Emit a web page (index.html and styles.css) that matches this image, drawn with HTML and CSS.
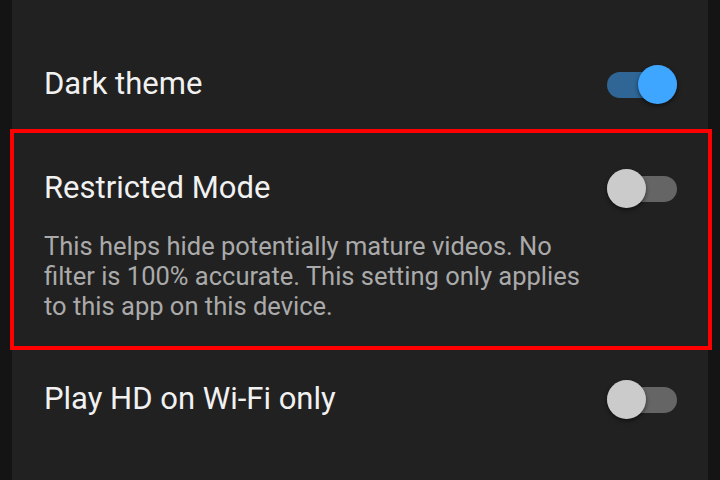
FILE: index.html
```html
<!DOCTYPE html>
<html lang="en">
<head>
<meta charset="utf-8">
<title>Settings</title>
<link rel="stylesheet" href="styles.css">
</head>
<body>
<main class="screen">
  <div class="row">
    <span class="title">Dark theme</span>
    <span class="switch on"><span class="track"></span><span class="thumb"></span></span>
  </div>
  <section class="setting highlighted">
    <div class="row">
      <span class="title">Restricted Mode</span>
      <span class="switch"><span class="track"></span><span class="thumb"></span></span>
    </div>
    <p class="desc">This helps hide potentially mature videos. No filter is 100% accurate. This setting only applies to this app on this device.</p>
  </section>
  <div class="row last">
    <span class="title">Play HD on Wi-Fi only</span>
    <span class="switch"><span class="track"></span><span class="thumb"></span></span>
  </div>
</main>
</body>
</html>
```
FILE: styles.css
```css
html, body {
  margin: 0;
  padding: 0;
  background: #141414;
  height: 480px;
  overflow: hidden;
}

.screen {
  margin: 0 12px;
  height: 480px;
  background: #212121;
  padding-top: 66px;
  box-sizing: border-box;
  font-family: Roboto, "Noto Sans", sans-serif;
}

.row {
  display: flex;
  align-items: center;
  justify-content: space-between;
  height: 36px;
  padding: 0 31px 0 32px;
}

.title {
  color: #f1f1f1;
  font-size: 31px;
  line-height: 36px;
}

.highlighted {
  margin: 27px -4px 0 -2px;
  border: 4px solid #ff0000;
  padding: 37px 0 25px;
}

.highlighted .row {
  padding: 0 31px 0 30px;
}

.desc {
  margin: 25px 0 0;
  padding: 0 0 0 30px;
  width: 552px;
  color: #aaaaaa;
  font-size: 25.5px;
  line-height: 30px;
}

.row.last {
  margin-top: 31px;
}

.switch {
  position: relative;
  width: 70px;
  height: 39px;
  flex: none;
}

.track {
  position: absolute;
  left: 0;
  right: 0;
  top: 7px;
  height: 26px;
  border-radius: 13px;
  background: #656565;
}

.thumb {
  position: absolute;
  left: 0;
  top: 0;
  width: 39px;
  height: 39px;
  border-radius: 50%;
  background: #cbcbcb;
  box-shadow: 0 2px 4px rgba(0, 0, 0, 0.5);
}

.switch.on .track {
  background: #2f6696;
}

.switch.on .thumb {
  left: auto;
  right: 0;
  background: #3ea6ff;
}
```
